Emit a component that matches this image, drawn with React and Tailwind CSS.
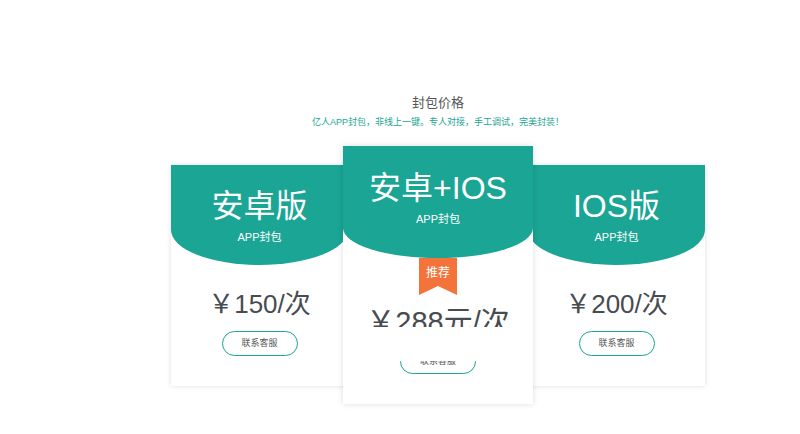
import React from "react";

const FONT = { fontFamily: '"Liberation Sans", "Noto Sans CJK SC", sans-serif' };

function Button({ className = "" }) {
  return (
    <div
      className={
        "w-[76px] h-[25px] shrink-0 rounded-full border border-[#1aa594] flex items-center justify-center text-[9px] text-[#555] " +
        className
      }
    >
      联系客服
    </div>
  );
}

function SideCard({ title, price }) {
  return (
    <div className="w-[177px] h-[221px] mt-[19px] bg-white shadow-[0_0_5px_rgba(0,0,0,0.13)] flex flex-col items-center">
      <div className="w-full h-[100px] bg-[#1aa594] rounded-b-[50%_35px] flex flex-col items-center pt-[25px] text-white">
        <div className="text-[32px] leading-none">{title}</div>
        <div className="text-[11px] leading-none mt-[10px]">APP封包</div>
      </div>
      <div className="mt-[26px] text-[26px] leading-none text-[#474b52]">{price}</div>
      <Button className="mt-[14px]" />
    </div>
  );
}

export default function App() {
  return (
    <div className="w-[800px] h-[434px] bg-white overflow-hidden" style={FONT}>
      <div className="ml-[171px] w-[534px] pt-[96px] flex flex-col items-center">
        <div className="text-[13px] leading-none text-[#555]">封包价格</div>
        <div className="mt-[9px] text-[9px] leading-none text-[#1aa594]">
          亿人APP封包，非线上一键。专人对接，手工调试，完美封装！
        </div>
        <div className="w-full mt-[19px] flex items-start">
          <SideCard title="安卓版" price="￥150/次" />
          <div className="relative z-10 -mx-[5px] w-[190px] h-[258px] bg-white shadow-[0_0_6px_rgba(0,0,0,0.14)] flex flex-col items-center">
            <div className="w-full h-[112px] bg-[#1aa594] rounded-b-[50%_30px] flex flex-col items-center pt-[26px] text-white">
              <div className="text-[32px] leading-none">安卓+IOS</div>
              <div className="text-[11px] leading-none mt-[10px]">APP封包</div>
            </div>
            <div className="w-[38px] h-[37px] bg-[#f4733a] [clip-path:polygon(0_0,100%_0,100%_100%,50%_76%,0_100%)] flex justify-center pt-[9px] text-[12px] leading-none text-white">
              推荐
            </div>
            <div className="mt-[13px] h-[19px] overflow-hidden">
              <div className="text-[29px] leading-none text-[#474b52]">￥288元/次</div>
            </div>
            <div className="mt-[34px] h-[13px] overflow-hidden flex items-end">
              <Button />
            </div>
          </div>
          <SideCard title="IOS版" price="￥200/次" />
        </div>
      </div>
    </div>
  );
}
